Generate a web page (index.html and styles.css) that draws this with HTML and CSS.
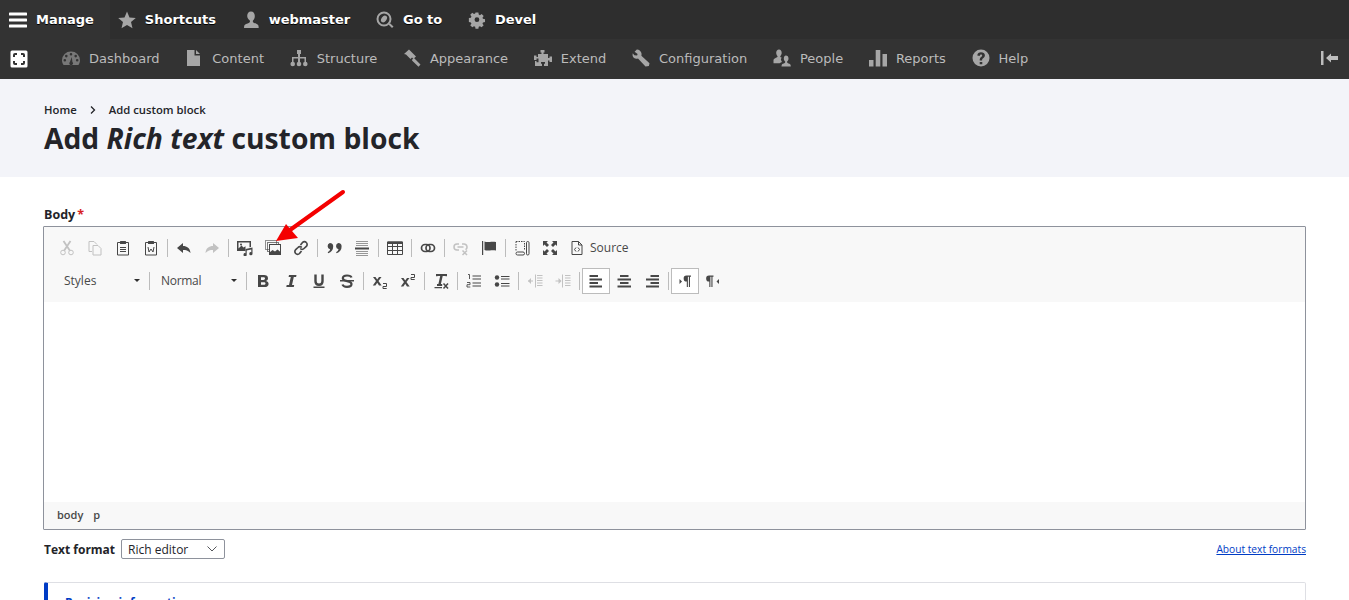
FILE: index.html
```html
<!DOCTYPE html>
<html lang="en">
<head>
    <meta charset="UTF-8">
    <title>Add Rich text custom block</title>
    <link rel="stylesheet" href="styles.css">
</head>
<body>
    <nav class="bar-top">
        <a class="bar-link bar-link-active">
            <svg class="bar-icon icon-white" viewBox="0 0 18 18"><path d="M1 1.500h16a1 1 0 0 1 0 3H1a1 1 0 0 1 0-3zM1 7.500h16a1 1 0 0 1 0 3H1a1 1 0 0 1 0-3zM1 13.500h16a1 1 0 0 1 0 3H1a1 1 0 0 1 0-3z"/></svg>
            Manage
        </a>
        <a class="bar-link">
            <svg class="bar-icon" viewBox="0 0 18 18"><path d="M9 .5l2.500 5.900 6.300.5-4.800 4.200 1.500 6.200L9 14l-5.500 3.300L5 11.100.2 6.900l6.300-.5z"/></svg>
            Shortcuts
        </a>
        <a class="bar-link">
            <svg class="bar-icon" viewBox="0 0 18 18"><path d="M9 .5c2.400 0 3.800 2 3.800 4.500 0 2-.8 3.700-1.800 4.500-.4.800-.2 1.700.6 2.200 2 .9 4.400 1.500 4.900 3.100l.2 2.200H2l.2-2.200c.5-1.600 3-2.200 5-3.100.8-.5 1-1.400.6-2.200C6.800 8.700 5.200 7 5.200 5 5.200 2.500 6.600.5 9 .5z"/></svg>
            webmaster
        </a>
        <a class="bar-link">
            <svg class="bar-icon" viewBox="0 0 18 18"><circle cx="8" cy="8" r="6.500" class="line" stroke-width="2"/><ellipse cx="8" cy="8" rx="2.500" ry="3.800" transform="rotate(35 8 8)"/><path d="M12.500 13.500l1.500-1.300 3.500 3.300-1.500 1.500z"/></svg>
            Go to
        </a>
        <a class="bar-link">
            <svg class="bar-icon" viewBox="0 0 18 18"><path fill-rule="evenodd" d="M7.300.8h3.400l.4 2.400 1.400.6 2-1.400 2.400 2.400-1.400 2 .6 1.400 2.400.4v3.400l-2.400.4-.6 1.400 1.400 2-2.400 2.400-2-1.400-1.400.6-.4 2.400H7.300l-.4-2.400-1.400-.6-2 1.400-2.400-2.400 1.400-2-.6-1.400-2.400-.4V7.200l2.400-.4.600-1.400-1.400-2 2.400-2.400 2 1.400 1.400-.6zM9 6.400a2.800 2.800 0 1 0 0 5.600 2.800 2.800 0 0 0 0-5.600z" transform="translate(1.300 .9) scale(.85)"/></svg>
            Devel
        </a>
    </nav>

    <nav class="bar-sub">
        <svg class="bar-square" viewBox="0 0 18 18"><rect x=".5" y=".5" width="17" height="17" rx="1.500" fill="#fff"/><path d="M4 7V5a1 1 0 0 1 1-1h2M11 4h2a1 1 0 0 1 1 1v2M14 11v2a1 1 0 0 1-1 1h-2M7 14H5a1 1 0 0 1-1-1v-2" fill="none" stroke="#333" stroke-width="2"/></svg>
        <div class="bar-menu">
            <a class="bar-link">
                <svg class="bar-icon icon-dim" viewBox="0 0 18 18"><path fill-rule="evenodd" d="M9 2.500a8.700 8.700 0 0 0-9 8.700c0 1.900.6 3.500 1.600 4.800h14.800c1-1.300 1.600-2.900 1.600-4.800a8.700 8.700 0 0 0-9-8.700zM9 4a1.300 1.300 0 1 1 0 2.600A1.300 1.300 0 0 1 9 4zM4.300 5.800a1.300 1.300 0 1 1 0 2.600 1.300 1.300 0 0 1 0-2.600zm9.400 0a1.300 1.300 0 1 1 0 2.600 1.300 1.300 0 0 1 0-2.600zM2.800 10a1.300 1.300 0 1 1 0 2.600 1.300 1.300 0 0 1 0-2.600zm12.400 0a1.300 1.300 0 1 1 0 2.600 1.300 1.300 0 0 1 0-2.600zM9.800 8l.6 5a1.800 1.800 0 1 1-2.500.1z"/></svg>
                Dashboard
            </a>
            <a class="bar-link">
                <svg class="bar-icon" viewBox="0 0 18 18"><path d="M2 1h7.500v5.500H15V17H2zM11 1l4 4h-4z"/></svg>
                Content
            </a>
            <a class="bar-link">
                <svg class="bar-icon" viewBox="0 0 18 18"><path d="M7 1h4v4h-1v3h6v5h-1.500V9.500H10V13H8V9.500H3.500V13H2V8h6V5H7z"/><circle cx="2.700" cy="15" r="2.300"/><circle cx="9" cy="15" r="2.300"/><circle cx="15.300" cy="15" r="2.300"/></svg>
                Structure
            </a>
            <a class="bar-link">
                <svg class="bar-icon" viewBox="0 0 18 18"><path d="M6 .5l7 7-2.500 2.300L9 8.500 7.500 10 3 5.500 1 5zM9.500 10l1.500-1 6.500 6.500-2 2.200L9 11.500z"/></svg>
                Appearance
            </a>
            <a class="bar-link">
                <svg class="bar-icon" viewBox="0 0 18 18"><path d="M6.500 1h4v2.500H9.500V5H14v4h1.500V7.500H18v5.500h-2.500V11.500H14V17h-4v-2.300h1V13H7v1.700h1V17H1v-5h1.500v1.300h2V9.500h-2V11H0V6.500h2.500V8H4V5h3.500V3.500h-1z"/></svg>
                Extend
            </a>
            <a class="bar-link">
                <svg class="bar-icon" viewBox="0 0 18 18"><path d="M4.800.6L2.600 2.800l3 2.200-.5 1.600-2.800-.3L.8 4.300C.2 6.300.7 8 2 9c1.200.9 2.800 1 4 .5l7.500 7.900 3.400-.3.600-2.900-8.100-7.500c.4-1.400.2-3-.8-4.200C7.700 1.300 6.400.4 4.800.6z"/></svg>
                Configuration
            </a>
            <a class="bar-link">
                <svg class="bar-icon" viewBox="0 0 18 18"><path d="M6 .500c1.700 0 2.700 1.400 2.700 3.200 0 1.300-.6 2.600-1.400 3.200-.2.600 0 1 .4 1.300l1.100.5c-.7.500-1 1.300-.8 2.300.2.800.6 1.500 1 2-.8.300-1.700.7-2.300 1.200H.5V11c.3-1.400 2-1.800 3.600-2.700.4-.3.600-.800.4-1.400C3.700 6.300 3.200 5 3.200 3.700 3.200 1.900 4.300.500 6 .500z"/><path d="M12.800 6.500c1.700 0 2.700 1.300 2.700 3 0 1.300-.6 2.500-1.400 3.100-.2.600 0 1 .5 1.300 1.200.6 2.700.9 3 2l.2 1.600H8.500l.2-1.600c.3-1.100 1.800-1.400 3-2 .5-.3.700-.7.500-1.300-.8-.6-1.400-1.800-1.400-3.100 0-1.700 1-3 2-3z"/></svg>
                People
            </a>
            <a class="bar-link">
                <svg class="bar-icon" viewBox="0 0 18 18"><path d="M0 11h4.500v6.500H0zM6.700 1h4.600v16.500H6.700zM13.500 5H18v12.500h-4.500z"/></svg>
                Reports
            </a>
            <a class="bar-link">
                <svg class="bar-icon" viewBox="0 0 18 18"><path fill-rule="evenodd" d="M9 .5a8.500 8.500 0 1 1 0 17 8.500 8.500 0 0 1 0-17zM7.700 13v2.300h2.600V13zM9 3.300c-2 0-3.500 1.100-3.700 3.300l2.400.3c.1-1 .5-1.500 1.300-1.500.7 0 1.200.4 1.200 1 0 .5-.3.900-1 1.500-1 .8-1.600 1.600-1.500 3.500h2.400c0-1.100.2-1.500 1-2.100 1-.8 1.800-1.600 1.800-3 0-2-1.700-3-3.900-3z"/></svg>
                Help
            </a>
        </div>
        <svg class="bar-collapse" viewBox="0 0 18 14"><path d="M0 0h2.500v14H0zM5 7l5-4.500V5h7v4h-7v2.500z"/></svg>
    </nav>

    <header class="page-head">
        <ol class="crumbs">
            <li>Home</li>
            <li class="crumb-sep">
                <svg viewBox="0 0 6 8"><path d="M1 .5L4.500 4 1 7.500" fill="none" stroke="currentColor" stroke-width="1.300"/></svg>
            </li>
            <li>Add custom block</li>
        </ol>
        <h1>Add <em>Rich text</em> custom block</h1>
    </header>

    <main class="content">
        <label class="field-label">Body<span class="req">*</span></label>

        <div class="editor">
            <div class="toolbar">
                <div class="tool-row">
                    <span class="tool off"><svg viewBox="0 0 16 16"><circle cx="4" cy="12.500" r="2.300" class="line"/><circle cx="12" cy="12.500" r="2.300" class="line"/><path d="M5.200 10.500L11.500 1M10.800 10.500L4.500 1" class="line" stroke-width="1.800"/></svg></span>
                    <span class="tool off"><svg viewBox="0 0 16 16"><path d="M2 1.500h5l3 3M2 1.500v10h3M6 5.500h5l3 3v6.500H6z" class="line"/></svg></span>
                    <span class="tool"><svg viewBox="0 0 16 16"><path d="M5 2.500H2.500v12.500h11V2.500H11" class="line"/><rect x="5" y="1" width="6" height="3" rx=".5"/><path d="M5 7.500h6M5 9.500h6M5 11.500h6" class="line"/></svg></span>
                    <span class="tool"><svg viewBox="0 0 16 16"><path d="M5 2.500H2.500v12.500h11V2.500H11" class="line"/><rect x="5" y="1" width="6" height="3" rx=".5"/><path d="M5 7l1 5 2-3 2 3 1-5" class="line"/></svg></span>
                    <i class="tool-sep"></i>
                    <span class="tool"><svg viewBox="0 0 16 16"><path d="M7 3L1 8l6 5v-3c3 0 5 .5 7.500 3C14 8 11 6 7 6z"/></svg></span>
                    <span class="tool off"><svg viewBox="0 0 16 16"><path d="M9 3l6 5-6 5v-3c-3 0-5 .5-7.500 3C2 8 5 6 9 6z"/></svg></span>
                    <i class="tool-sep"></i>
                    <span class="tool"><svg viewBox="0 0 16 16"><path fill-rule="evenodd" d="M0 1h14v6l-1.500.3V2.500h-11v6l3-3 2 2 2-1.300V9L8.500 11H0zM4 3.500a1 1 0 1 1 0 2 1 1 0 0 1 0-2z"/><path d="M8.500 9L15.500 7.500v6.200a1.600 1.600 0 1 1-1.200-1.500V9.500l-4.600 1v4.200a1.600 1.600 0 1 1-1.200-1.500z"/></svg></span>
                    <span class="tool"><svg viewBox="0 0 16 16"><rect x=".5" y=".5" width="11" height="9" class="line" opacity=".6"/><rect x="2.500" y="2.500" width="11" height="9" class="line" opacity=".7"/><rect x="4.500" y="4.500" width="11" height="10" fill="#f8f8f8" stroke="#474747"/><path d="M4.500 15v-2.500l3-2.500 2.500 1.500 2.500-2 3 2.500V15z"/></svg></span>
                    <span class="tool"><svg viewBox="0 0 16 16"><path d="M7.500 5l2-2.500a2.600 2.600 0 0 1 3.800 0 2.600 2.600 0 0 1 0 3.800L11 8.500a2.600 2.600 0 0 1-3.800 0M8.500 11l-2 2.500a2.600 2.600 0 0 1-3.800 0 2.600 2.600 0 0 1 0-3.800L5 7.500a2.600 2.600 0 0 1 3.800 0" class="line" stroke-width="1.700"/></svg></span>
                    <i class="tool-sep"></i>
                    <span class="tool"><svg viewBox="0 0 16 16"><path d="M3.800 3a3.400 3.400 0 0 1 3.400 3.500c0 3.500-2 5.800-5 6.700l-.5-1c1.400-.7 2.200-1.700 2.400-2.900A3.300 3.300 0 0 1 3.800 3zM12.200 3a3.400 3.400 0 0 1 3.400 3.500c0 3.500-2 5.800-5 6.700l-.5-1c1.400-.7 2.200-1.700 2.400-2.900A3.300 3.300 0 0 1 12.200 3z"/></svg></span>
                    <span class="tool"><svg viewBox="0 0 16 16"><path d="M2 1.500h12M2 3.500h12M2 5.500h12M2 11.500h12M2 13.500h12M2 15.500h12" class="line" opacity=".55"/><path d="M1 7.500h14v2H1z"/></svg></span>
                    <i class="tool-sep"></i>
                    <span class="tool"><svg viewBox="0 0 16 16"><path d="M.5 2h15v12.500H.5zM.5 6.500h15M.5 10.500h15M5.500 4v10.500M10.500 4v10.500" class="line"/><path d="M.5 1.500h15V4H.5z"/></svg></span>
                    <i class="tool-sep"></i>
                    <span class="tool"><svg viewBox="0 0 16 16"><rect x="1.500" y="4.500" width="8.500" height="7" rx="3.500" class="line" stroke-width="1.700"/><rect x="6" y="4.500" width="8.500" height="7" rx="3.500" class="line" stroke-width="1.700"/></svg></span>
                    <i class="tool-sep"></i>
                    <span class="tool off"><svg viewBox="0 0 16 16"><path d="M6 4H4a3 3 0 0 0 0 6h2M9 4h2a3 3 0 0 1 1.500 5.600M4.500 7h6" class="line" stroke-width="1.500"/><path d="M9.500 10.500l4.500 4.500M14 10.500L9.500 15" class="line" stroke-width="1.500"/></svg></span>
                    <span class="tool"><svg viewBox="0 0 16 16"><path d="M1 1h1.200v14H1zM3.500 1.500c3.500 1.500 6-.5 11.500.5v8.500c-5.500-1-8 1-11.500-.5z"/></svg></span>
                    <i class="tool-sep"></i>
                    <span class="tool"><svg viewBox="0 0 16 16"><path d="M2 1.500h8.500v9M2 1.500v9" class="line" stroke-dasharray="1.500 1"/><rect x="2" y="12" width="8.500" height="3" rx="1.500" class="line"/><rect x="12.500" y="1.500" width="2.500" height="13.500" rx="1.200" class="line"/></svg></span>
                    <span class="tool"><svg viewBox="0 0 16 16"><path d="M1 1h5L4.500 2.500l2.500 2.500L5 7 2.500 4.500 1 6zM15 1v5l-1.500-1.500L11 7 9 5l2.500-2.500L10 1zM1 15v-5l1.500 1.500L5 9l2 2-2.500 2.500L6 15zM15 15h-5l1.500-1.500L9 11l2-2 2.500 2.500L15 10z"/></svg></span>
                    <span class="tool tool-text">
                        <svg viewBox="0 0 16 16"><path d="M3 1.500h6.500l3.500 3.500v9.500H3zM9.500 1.500v3.500H13" class="line"/><path d="M7 7.500L5.500 9.500 7 11.500M9 7.500l1.500 2L9 11.500" class="line"/></svg>
                        Source
                    </span>
                </div>
                <div class="tool-row">
                    <span class="combo">Styles<i class="combo-arrow"></i></span>
                    <i class="tool-sep"></i>
                    <span class="combo combo-format">Normal<i class="combo-arrow"></i></span>
                    <i class="tool-sep"></i>
                    <span class="tool"><svg viewBox="0 0 16 16"><path fill-rule="evenodd" d="M3 2h6c2.500 0 4 1.200 4 3.200 0 1.300-.7 2.300-2 2.700 1.700.4 2.600 1.500 2.600 3 0 2-1.600 3.100-4.100 3.100H3zm3 2.200v2.800h2.400c1 0 1.600-.5 1.600-1.400s-.6-1.400-1.600-1.400zm0 5v2.600h2.800c1 0 1.700-.5 1.700-1.300s-.7-1.300-1.700-1.300z"/></svg></span>
                    <span class="tool"><svg viewBox="0 0 16 16"><path d="M6 2h7.500l-.4 2h-2.300L9 12h2.200l-.4 2H3.300l.4-2h2.300l1.800-8H5.600z"/></svg></span>
                    <span class="tool"><svg viewBox="0 0 16 16"><path d="M4.500 1.500v6.800c0 2.300 1.300 3.500 3.500 3.500s3.500-1.200 3.500-3.500V1.500" class="line" stroke-width="2.400"/><path d="M2.500 13.500h11v1.500h-11z"/></svg></span>
                    <span class="tool"><svg viewBox="0 0 16 16"><path d="M12.500 4.500C12 3 10.300 2.500 8 2.500c-2.500 0-4.200 1-4.200 2.800 0 3.700 8.700 2 8.700 5.700 0 2-2 2.800-4.500 2.800-2.300 0-4-.7-4.500-2.300" class="line" stroke-width="2.200"/><path d="M1 7h14v1.500H1z"/></svg></span>
                    <i class="tool-sep"></i>
                    <span class="tool"><svg viewBox="0 0 16 16"><path d="M1 4h2.500l1.700 2.500L7 4h2.500L6.500 8l3.200 4.500H7L5.200 9.800 3.400 12.500H.8L4 8z"/><path d="M11 10.500h3.500v3h-3.500v2h3.700" class="line"/></svg></span>
                    <span class="tool"><svg viewBox="0 0 16 16"><path d="M1 5h2.500l1.700 2.500L7 5h2.500L6.500 9l3.200 4.500H7L5.200 10.800 3.400 13.500H.8L4 9z"/><path d="M11 1.500h3.500v3h-3.500v2h3.700" class="line"/></svg></span>
                    <i class="tool-sep"></i>
                    <span class="tool"><svg viewBox="0 0 16 16"><path d="M3 1h11v2.300h-1.500V3H9.700L7.900 11h1.300v2H4v-2h1.400L7.200 3H4.500v.3H3zM1.500 14h7.500v1.300H1.500z"/><path d="M10.500 10.500l4.500 5M15 10.500l-4.500 5" class="line" stroke-width="1.500"/></svg></span>
                    <i class="tool-sep"></i>
                    <span class="tool"><svg viewBox="0 0 16 16"><path d="M6.500 3h8.500M6.500 6h8.500M6.500 10h8.500M6.500 13h8.500" class="line"/><path d="M2 1.500h1.500V6M1 9.500h3v2.200H1V14h3.300" class="line" stroke-width=".9"/></svg></span>
                    <span class="tool"><svg viewBox="0 0 16 16"><path d="M7 3.500h8.500M7 6h8.500M7 10.500h8.500M7 13h8.500" class="line"/><circle cx="3" cy="4.500" r="2.200"/><circle cx="3" cy="11.500" r="2.200"/></svg></span>
                    <i class="tool-sep"></i>
                    <span class="tool off"><svg viewBox="0 0 16 16"><path d="M8.500 1.500v13M10 2.500h5.500M10 5h5.500M10 7.500h5.500M10 10h5.500M10 12.500h5.500M1 8h5" class="line"/><path d="M1 8l3-3v6z"/></svg></span>
                    <span class="tool off"><svg viewBox="0 0 16 16"><path d="M7.500 1.500v13M10 2.500h5.500M10 5h5.500M10 7.500h5.500M10 10h5.500M10 12.500h5.500M.5 8h5" class="line"/><path d="M6.500 8l-3-3v6z"/></svg></span>
                    <i class="tool-sep"></i>
                    <span class="tool tool-on"><svg viewBox="0 0 16 16"><path d="M1.500 2h8.500v2H1.500zM1.500 5.500H14v2H1.500zM1.500 9h8.500v2H1.500zM1.500 12.500H14v2H1.500z"/></svg></span>
                    <span class="tool"><svg viewBox="0 0 16 16"><path d="M4 2h8.500v2H4zM1.500 5.500h13.500v2H1.500zM4 9h8.500v2H4zM1.500 12.500h13.500v2H1.500z"/></svg></span>
                    <span class="tool"><svg viewBox="0 0 16 16"><path d="M6.500 2H15v2H6.500zM2 5.500h13v2H2zM6.500 9H15v2H6.500zM2 12.500h13v2H2z"/></svg></span>
                    <i class="tool-sep"></i>
                    <span class="tool tool-on"><svg viewBox="0 0 16 16"><path d="M2.500 6l2.500 2.500L2.500 11z"/><path fill-rule="evenodd" d="M9.500 2.500h4.500v1.200h-1V14h-1.100V3.700h-1V14H9.800V8.500a3 3 0 0 1-.3-6z"/></svg></span>
                    <span class="tool"><svg viewBox="0 0 16 16"><path d="M14 6l-2.500 2.500L14 11z"/><path fill-rule="evenodd" d="M4 2.500h4.500v1.200h-1V14H6.400V3.700h-1V14H4.300V8.500A3 3 0 0 1 4 2.500z"/></svg></span>
                </div>
            </div>
            <div class="editor-area"></div>
            <div class="editor-path"><span>body</span><span>p</span></div>
        </div>

        <div class="format-row">
            <label class="format-label">Text format</label>
            <div class="select-box">
                <select class="format-select"><option>Rich editor</option></select>
                <svg class="select-chevron" viewBox="0 0 10 6"><path d="M.5.5L5 5 9.500.5" fill="none" stroke="currentColor"/></svg>
            </div>
            <a class="format-link" href="#">About text formats</a>
        </div>

        <section class="revision">
            <a class="revision-title">Revision information</a>
        </section>
    </main>

    <svg class="red-arrow" viewBox="0 0 80 60"><path d="M73 4L20 42" fill="none" stroke="#f40000" stroke-width="4" stroke-linecap="round"/><path d="M6 53l10-17 12 14z" fill="#f40000"/></svg>
</body>
</html>
```

FILE: styles.css
```css
html, body { height: 600px; overflow: hidden; }
body { margin: 0; background: #fff; color: #232429; font-family: "Open Sans", "Noto Sans", sans-serif; position: relative; }
a { color: inherit; text-decoration: none; }

/* admin toolbar */
.bar-top, .bar-sub { display: flex; align-items: center; font-family: "DejaVu Sans", sans-serif; font-size: 13px; }
.bar-top { height: 39px; background: #2e2e2e; color: #fff; font-weight: bold; text-shadow: 0 1px 0 #000; }
.bar-sub { height: 40px; background: #333; color: #bbb; padding-left: 10px; padding-right: 10px; }
.bar-link { display: flex; align-items: center; height: 100%; padding: 0 16.750px 0 9px; white-space: nowrap; }
.bar-sub .bar-link { padding-bottom: 2px; box-sizing: border-box; }
.bar-link-active { background: #333; }
.bar-top .bar-link { height: 39px; padding-left: 8px; padding-right: 17.700px; }
.bar-top .bar-link-active { padding-left: 9px; padding-right: 16px; }
.bar-icon { width: 18px; height: 18px; margin-right: 9px; fill: #a6a6a6; flex: none; }
.bar-icon .line { fill: none; stroke: #a6a6a6; }
.icon-white { fill: #fff; }
.icon-dim { fill: #787878; }
.bar-square { width: 18px; height: 18px; margin-right: 25px; }
.bar-menu { display: flex; align-items: center; flex: 1; height: 100%; }
.bar-collapse { width: 18px; height: 14px; fill: #bdbdbd; margin-top: -3px; }

/* page title */
.page-head { height: 98px; background: #f3f4f9; padding-left: 44px; box-sizing: border-box; padding-top: 22px; }
.crumbs { display: flex; align-items: center; list-style: none; margin: 0; padding: 0; font-size: 11.300px; font-weight: 600; line-height: 18px; }
.crumb-sep { display: flex; margin: 0 13px 0 13px; }
.crumb-sep svg { width: 6px; height: 8px; }
h1 { margin: -1px 0 0; font-size: 28.250px; font-weight: 700; line-height: 40px; }

/* form */
.content { padding: 29px 43px 0; }
.field-label { display: block; margin-left: 1px; font-size: 12.500px; font-weight: 700; line-height: 18px; margin-bottom: 2px; }
.req { color: #d72222; margin-left: 2px; }

.editor { border: 1px solid #8e929c; border-radius: 1px; background: #f8f8f8; }
.toolbar { padding: 4px 0 5px 9px; }
.tool-row { display: flex; align-items: center; height: 33px; }
.tool { display: flex; align-items: center; justify-content: center; box-sizing: border-box; width: 28px; height: 26px; color: #474747; flex: none; }
.tool svg { width: 16px; height: 16px; fill: #474747; }
.tool svg .line { fill: none; stroke: #474747; }
.off { opacity: .3; }
.tool-on { border: 1px solid #bcbcbc; background: #fff; }
.tool-sep { width: 1px; height: 18px; margin: 0 2px; background: #bcbcbc; flex: none; }
.tool-text { width: auto; font-size: 12px; gap: 5px; color: #484848; padding: 0 6px 0 5px; }
.combo { display: flex; align-items: center; box-sizing: border-box; width: 94px; padding-left: 11px; font-size: 12px; color: #484848; position: relative; flex: none; }
.combo-format { width: 92px; padding-left: 9px; letter-spacing: -.3px; }
.combo-arrow { position: absolute; left: 81px; top: 7px; border-top: 3px solid #2f2f2f; border-left: 3px solid transparent; border-right: 3px solid transparent; }
.combo-format .combo-arrow { left: 79px; }

.editor-area { height: 200px; background: #fff; }
.editor-path { display: flex; gap: 10px; height: 27px; box-sizing: border-box; padding-bottom: 2px; align-items: center; padding-left: 13px; font-size: 11px; font-weight: 600; color: #484848; }

.format-row { display: flex; align-items: center; height: 20px; margin-top: 9px; }
.format-label { margin-left: 1px; font-size: 12px; font-weight: 700; margin-right: 6px; }
.select-box { position: relative; }
.format-select { appearance: none; display: block; width: 104px; height: 20px; padding: 0 0 0 6px; border: 1px solid #8e929c; border-radius: 2px; background: #fff; color: #232429; font-family: inherit; font-size: 12px; }
.select-chevron { position: absolute; left: 86px; top: 7px; width: 10px; height: 6px; color: #55565b; }
.format-link { margin-left: auto; color: #003cc5; font-size: 10.200px; text-decoration: underline; }

.revision { margin-top: 23px; margin-left: 1px; height: 60px; border: 1px solid #dedfe4; border-left: 4px solid #003cc5; border-radius: 2px; box-sizing: border-box; padding: 11px 0 0 17px; font-size: 12px; font-weight: 700; color: #003cc5; }

/* annotation over the toolbar */
.red-arrow { position: absolute; left: 270px; top: 188px; width: 80px; height: 60px; }
```
